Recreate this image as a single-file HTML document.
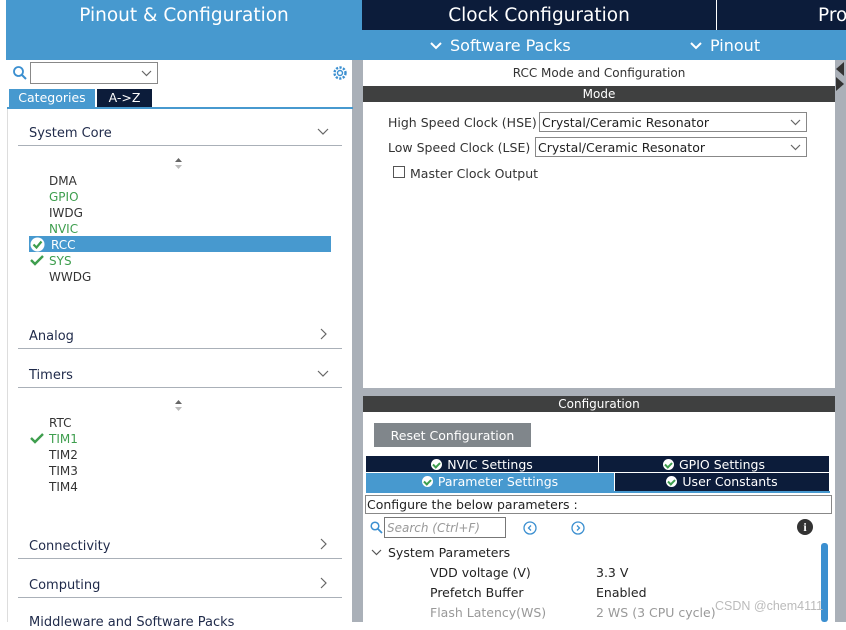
<!DOCTYPE html>
<html><head><meta charset="utf-8"><style>
*{margin:0;padding:0;box-sizing:border-box}
body{width:846px;height:622px;overflow:hidden;background:#fff;font-family:"DejaVu Sans","Liberation Sans",sans-serif;position:relative;color:#222}
.a{position:absolute}
.t{white-space:nowrap}
.sec{position:absolute;left:29px;font-size:13px;color:#1f2a4a}
.ln{position:absolute;left:18px;width:324px;height:1px;background:#aab0b8}
.it{position:absolute;left:49px;font-size:12px;color:#333}
.g{color:#3e9e4e}
.sel{background:#fff;border:1px solid #888}
.ck{display:inline-block;width:11px;height:11px;border-radius:50%;background:#fff;vertical-align:-1px;margin-right:5px;position:relative}
.ck:after{content:"";position:absolute;left:3px;top:1.5px;width:3px;height:5px;border:solid #3e9e4e;border-width:0 2px 2px 0;transform:rotate(45deg)}
</style></head><body>
<!-- top header -->
<div class="a" style="left:6px;top:0;width:356px;height:60px;background:#4799cf"></div>
<div class="a t" style="left:6px;top:5px;width:356px;text-align:center;color:#fff;font-size:18.5px">Pinout &amp; Configuration</div>
<div class="a" style="left:362px;top:0;width:354px;height:30px;background:#0c1c3a"></div>
<div class="a t" style="left:362px;top:5px;width:354px;text-align:center;color:#fff;font-size:18.5px">Clock Configuration</div>
<div class="a" style="left:717px;top:0;width:129px;height:30px;background:#0c1c3a"></div>
<div class="a t" style="left:818px;top:5px;color:#fff;font-size:18.5px">Pro</div>
<div class="a" style="left:362px;top:30px;width:484px;height:30px;background:#4799cf"></div>
<svg class="a" style="left:430px;top:41px" width="12" height="9"><path d="M1 2l5 5 5-5" stroke="#fff" stroke-width="2" fill="none"/></svg>
<div class="a t" style="left:450px;top:36px;color:#fff;font-size:16px">Software Packs</div>
<svg class="a" style="left:690px;top:41px" width="12" height="9"><path d="M1 2l5 5 5-5" stroke="#fff" stroke-width="2" fill="none"/></svg>
<div class="a t" style="left:710px;top:36px;color:#fff;font-size:16px">Pinout</div>

<!-- left panel -->
<div class="a" style="left:352px;top:60px;width:11px;height:562px;background:#aab0b8"></div>
<svg class="a" style="left:12px;top:65px" width="16" height="16"><circle cx="6.5" cy="6.5" r="4.5" fill="none" stroke="#3b8fd0" stroke-width="1.8"/><line x1="10" y1="10" x2="14" y2="14" stroke="#3b8fd0" stroke-width="2"/></svg>
<div class="a sel" style="left:30px;top:62px;width:128px;height:22px"></div>
<svg class="a" style="left:141px;top:70px" width="11" height="7"><path d="M1 1l4.5 4.5L10 1" stroke="#666" stroke-width="1.2" fill="none"/></svg>
<svg class="a" style="left:331px;top:64px" width="18" height="18"><circle cx="9" cy="9" r="5.5" fill="none" stroke="#3b8fd0" stroke-width="2.4" stroke-dasharray="2.2 1.4"/><circle cx="9" cy="9" r="2.5" fill="none" stroke="#3b8fd0" stroke-width="1.4"/></svg>
<div class="a" style="left:9px;top:89px;width:86px;height:18px;background:#4799cf;color:#fff;font-size:12.5px;text-align:center;line-height:18px">Categories</div>
<div class="a" style="left:97px;top:89px;width:55px;height:18px;background:#0c1c3a;color:#fff;font-size:12.5px;text-align:center;line-height:18px">A-&gt;Z</div>
<div class="a" style="left:7px;top:107px;width:346px;height:2px;background:#4799cf"></div>
<div class="a" style="left:7px;top:109px;width:1px;height:513px;background:#ddd"></div>

<div class="sec t" style="top:126px">System Core</div>
<svg class="a" style="left:317px;top:128px" width="12" height="8"><path d="M1 1l5 5 5-5" stroke="#666" stroke-width="1.2" fill="none"/></svg>
<div class="ln" style="top:145px"></div>
<svg class="a" style="left:174px;top:158px" width="9" height="11"><path d="M1 4L4.5 0 8 4z" fill="#666"/><path d="M1 7L4.5 11 8 7z" fill="#bbb"/></svg>
<div class="it" style="top:174px">DMA</div>
<div class="it g" style="top:190px">GPIO</div>
<div class="it" style="top:206px">IWDG</div>
<div class="it g" style="top:222px">NVIC</div>
<div class="a" style="left:29px;top:236px;width:302px;height:16px;background:#4799cf"></div>
<svg class="a" style="left:30px;top:237px" width="15" height="15"><circle cx="7.5" cy="7.5" r="7" fill="#fff"/><path d="M3.5 7.5l3 3 5-6" stroke="#3e9e4e" stroke-width="2.2" fill="none"/></svg>
<div class="it" style="top:238px;left:51px;color:#fff">RCC</div>
<svg class="a" style="left:30px;top:254px" width="14" height="12"><path d="M1 6l4 4 8-8" stroke="#3e9e4e" stroke-width="2.4" fill="none"/></svg>
<div class="it g" style="top:254px">SYS</div>
<div class="it" style="top:270px">WWDG</div>

<div class="sec t" style="top:329px">Analog</div>
<svg class="a" style="left:320px;top:328px" width="8" height="12"><path d="M1 1l5 5-5 5" stroke="#666" stroke-width="1.2" fill="none"/></svg>
<div class="ln" style="top:348px"></div>
<div class="sec t" style="top:368px">Timers</div>
<svg class="a" style="left:317px;top:370px" width="12" height="8"><path d="M1 1l5 5 5-5" stroke="#666" stroke-width="1.2" fill="none"/></svg>
<div class="ln" style="top:387px"></div>
<svg class="a" style="left:174px;top:400px" width="9" height="11"><path d="M1 4L4.5 0 8 4z" fill="#666"/><path d="M1 7L4.5 11 8 7z" fill="#bbb"/></svg>
<div class="it" style="top:416px">RTC</div>
<svg class="a" style="left:30px;top:432px" width="14" height="12"><path d="M1 6l4 4 8-8" stroke="#3e9e4e" stroke-width="2.4" fill="none"/></svg>
<div class="it g" style="top:432px">TIM1</div>
<div class="it" style="top:448px">TIM2</div>
<div class="it" style="top:464px">TIM3</div>
<div class="it" style="top:480px">TIM4</div>
<div class="sec t" style="top:539px">Connectivity</div>
<svg class="a" style="left:320px;top:538px" width="8" height="12"><path d="M1 1l5 5-5 5" stroke="#666" stroke-width="1.2" fill="none"/></svg>
<div class="ln" style="top:558px"></div>
<div class="sec t" style="top:578px">Computing</div>
<svg class="a" style="left:320px;top:577px" width="8" height="12"><path d="M1 1l5 5-5 5" stroke="#666" stroke-width="1.2" fill="none"/></svg>
<div class="ln" style="top:597px"></div>
<div class="sec t" style="top:615px">Middleware and Software Packs</div>

<!-- right side -->
<div class="a" style="left:835px;top:60px;width:11px;height:562px;background:#aab0b8"></div>
<div class="a" style="left:836px;top:62px;width:0;height:0;border-top:7px solid transparent;border-bottom:7px solid transparent;border-right:8px solid #333"></div>
<div class="a" style="left:836px;top:77px;width:0;height:0;border-top:7px solid transparent;border-bottom:7px solid transparent;border-left:8px solid #333"></div>
<div class="a" style="left:363px;top:388px;width:472px;height:8px;background:#aab0b8"></div>
<div class="a t" style="left:363px;top:66px;width:472px;text-align:center;font-size:12px;color:#333">RCC Mode and Configuration</div>
<div class="a" style="left:363px;top:86px;width:472px;height:16px;background:#3f4040;color:#fff;font-size:12px;text-align:center;line-height:16px">Mode</div>
<div class="a t" style="left:388px;top:115px;font-size:12.5px;color:#333">High Speed Clock (HSE)</div>
<div class="a sel" style="left:539px;top:112px;width:268px;height:20px"></div>
<div class="a t" style="left:542px;top:115px;font-size:12.5px;color:#222">Crystal/Ceramic Resonator</div>
<svg class="a" style="left:790px;top:119px" width="11" height="7"><path d="M1 1l4.5 4.5L10 1" stroke="#666" stroke-width="1.2" fill="none"/></svg>
<div class="a t" style="left:388px;top:140px;font-size:12.5px;color:#333">Low Speed Clock (LSE)</div>
<div class="a sel" style="left:535px;top:137px;width:272px;height:20px"></div>
<div class="a t" style="left:538px;top:140px;font-size:12.5px;color:#222">Crystal/Ceramic Resonator</div>
<svg class="a" style="left:790px;top:144px" width="11" height="7"><path d="M1 1l4.5 4.5L10 1" stroke="#666" stroke-width="1.2" fill="none"/></svg>
<div class="a" style="left:393px;top:166px;width:12px;height:12px;border:1px solid #555;background:#fff"></div>
<div class="a t" style="left:410px;top:166px;font-size:12.5px;color:#333">Master Clock Output</div>

<div class="a" style="left:363px;top:396px;width:472px;height:16px;background:#3f4040;color:#fff;font-size:12px;text-align:center;line-height:17px">Configuration</div>
<div class="a" style="left:374px;top:423px;width:157px;height:24px;background:#80868b;color:#fff;font-size:12.5px;text-align:center;line-height:25px">Reset Configuration</div>
<div class="a t" style="left:366px;top:456px;width:232px;height:16px;background:#0c1c3a;color:#fff;font-size:12.5px;text-align:center;line-height:17px"><span class="ck"></span>NVIC Settings</div>
<div class="a t" style="left:599px;top:456px;width:230px;height:16px;background:#0c1c3a;color:#fff;font-size:12.5px;text-align:center;line-height:17px"><span class="ck"></span>GPIO Settings</div>
<div class="a t" style="left:366px;top:473px;width:248px;height:18px;background:#4799cf;color:#fff;font-size:12.5px;text-align:center;line-height:18px"><span class="ck"></span>Parameter Settings</div>
<div class="a t" style="left:615px;top:473px;width:214px;height:18px;background:#0c1c3a;color:#fff;font-size:12.5px;text-align:center;line-height:18px"><span class="ck"></span>User Constants</div>
<div class="a" style="left:366px;top:491px;width:464px;height:2px;background:#4799cf"></div>
<div class="a" style="left:365px;top:495px;width:467px;height:19px;border:1px solid #888"></div>
<div class="a t" style="left:367px;top:497px;font-size:12.5px;color:#222">Configure the below parameters :</div>
<svg class="a" style="left:370px;top:521px" width="13" height="13"><circle cx="5" cy="5" r="3.8" fill="none" stroke="#3b8fd0" stroke-width="1.5"/><line x1="8" y1="8" x2="12" y2="12" stroke="#3b8fd0" stroke-width="1.7"/></svg>
<div class="a" style="left:384px;top:517px;width:122px;height:21px;border:1px solid #777"></div>
<div class="a t" style="left:387px;top:521px;font-size:12px;color:#999;font-style:italic">Search (Ctrl+F)</div>
<svg class="a" style="left:523px;top:521px" width="14" height="14"><circle cx="7" cy="7" r="6" fill="none" stroke="#3b8fd0" stroke-width="1.3"/><path d="M8 4.5L5.5 7 8 9.5" stroke="#3b8fd0" stroke-width="1.3" fill="none"/></svg>
<svg class="a" style="left:571px;top:521px" width="14" height="14"><circle cx="7" cy="7" r="6" fill="none" stroke="#3b8fd0" stroke-width="1.3"/><path d="M6 4.5L8.5 7 6 9.5" stroke="#3b8fd0" stroke-width="1.3" fill="none"/></svg>
<div class="a" style="left:797px;top:519px;width:16px;height:16px;border-radius:50%;background:#333;color:#fff;font-size:12px;font-weight:bold;text-align:center;line-height:16px;font-family:'Liberation Serif',serif">i</div>
<svg class="a" style="left:371px;top:549px" width="11" height="8"><path d="M1 1l4.5 4.5L10 1" stroke="#555" stroke-width="1.2" fill="none"/></svg>
<div class="a t" style="left:388px;top:545px;font-size:12.5px;color:#222">System Parameters</div>
<div class="a t" style="left:430px;top:565px;font-size:12.5px;color:#222">VDD voltage (V)</div>
<div class="a t" style="left:596px;top:565px;font-size:12.5px;color:#222">3.3 V</div>
<div class="a t" style="left:430px;top:585px;font-size:12.5px;color:#222">Prefetch Buffer</div>
<div class="a t" style="left:596px;top:585px;font-size:12.5px;color:#222">Enabled</div>
<div class="a t" style="left:430px;top:605px;font-size:12.5px;color:#999">Flash Latency(WS)</div>
<div class="a t" style="left:596px;top:605px;font-size:12.5px;color:#999">2 WS (3 CPU cycle)</div>
<div class="a" style="left:821px;top:543px;width:7px;height:79px;background:#3b8fd0;border-radius:3px"></div>
<div class="a t" style="left:715px;top:599px;font-size:12.5px;color:#bbb;font-family:'Liberation Sans',sans-serif">CSDN @chem4111</div>
</body></html>
